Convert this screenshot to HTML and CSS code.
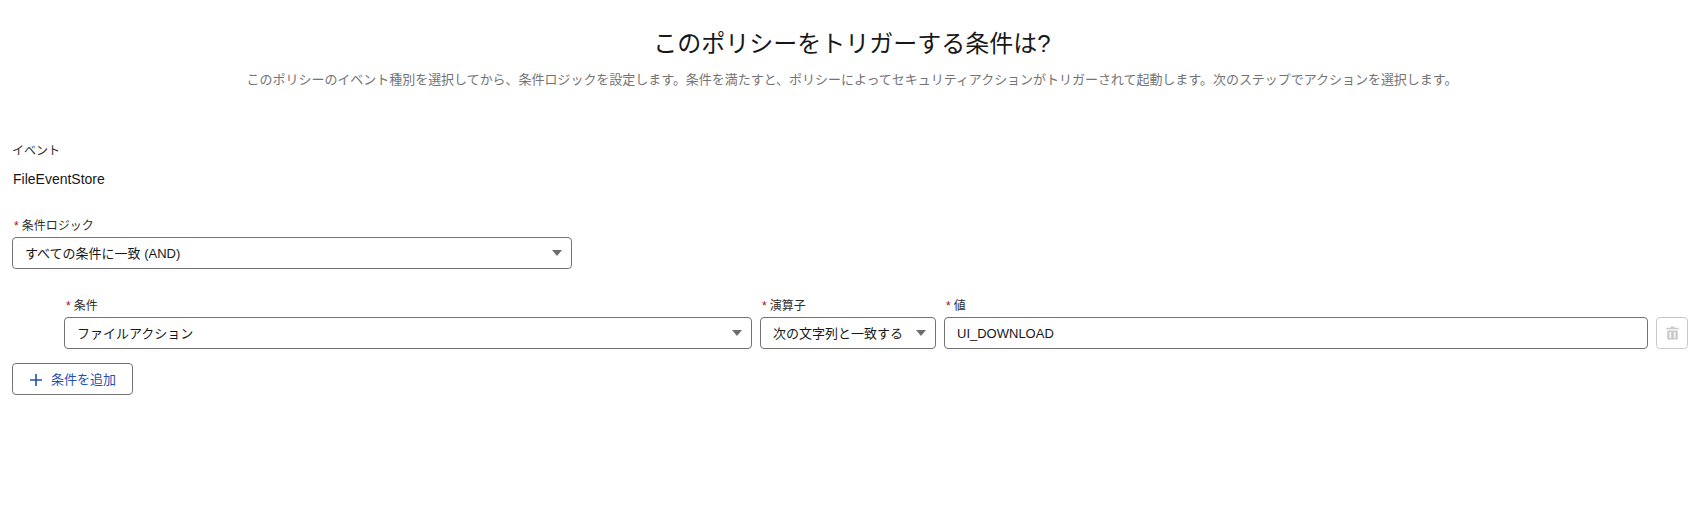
FILE: index.html
```html
<!DOCTYPE html>
<html lang="ja">
<head>
<meta charset="utf-8">
<title>条件</title>
<link rel="stylesheet" href="styles.css">
</head>
<body>
<main class="page">
  <header class="head">
    <h1 class="title">このポリシーをトリガーする条件は?</h1>
    <p class="sub">このポリシーのイベント種別を選択してから、条件ロジックを設定します。条件を満たすと、ポリシーによってセキュリティアクションがトリガーされて起動します。次のステップでアクションを選択します。</p>
  </header>
  <section class="event">
    <div class="label plain">イベント</div>
    <div class="event-value">FileEventStore</div>
  </section>
  <section class="logic">
    <div class="label"><span class="req">*</span>条件ロジック</div>
    <div class="select"><span class="val">すべての条件に一致 (AND)</span><span class="caret"></span></div>
  </section>
  <section class="row">
    <div class="field f-cond">
      <div class="label"><span class="req">*</span>条件</div>
      <div class="select"><span class="val">ファイルアクション</span><span class="caret"></span></div>
    </div>
    <div class="field f-op">
      <div class="label"><span class="req">*</span>演算子</div>
      <div class="select"><span class="val">次の文字列と一致する</span><span class="caret"></span></div>
    </div>
    <div class="field f-val">
      <div class="label"><span class="req">*</span>値</div>
      <div class="select"><span class="val">UI_DOWNLOAD</span></div>
    </div>
    <button class="trash" type="button" aria-label="削除">
      <svg width="13" height="14" viewBox="0 0 13 14"><path d="M4.7 0.5h3.6v1.2h4.4V3.2H0.3V1.7h4.4zM1.3 4.4h10.4V13.5H1.3zM3.6 6v6h1.5V6zm4.3 0v6h1.5V6z" fill="#c9c9c9" fill-rule="evenodd"/></svg>
    </button>
  </section>
  <button class="add" type="button">
    <svg class="add-icon" width="12" height="12" viewBox="0 0 12 12"><path d="M5.2 0h1.6v5.2H12v1.6H6.8V12H5.2V6.8H0V5.2h5.2z" fill="#2450b4"/></svg>
    <span class="add-text">条件を追加</span>
  </button>
</main>
</body>
</html>
```
FILE: styles.css
```css
* { box-sizing: border-box; }
html, body { margin: 0; background: #fff; }
body {
  font-family: "Liberation Sans", "Noto Sans CJK JP", sans-serif;
  color: #181818;
  font-size: 13px;
}
.page { width: 1706px; height: 520px; padding: 0 18px 0 12px; }
.head { text-align: center; padding: 28px 0 0 4px; }
.title { margin: 0; font-size: 24px; font-weight: 400; line-height: 32px; color: #181818; }
.sub { margin: 10px 0 0; font-size: 13px; line-height: 20px; color: #747474; letter-spacing: -0.03px; }
.event { margin-top: 52px; }
.label { font-size: 12px; line-height: 18px; color: #2e2e2e; }
.req { color: #ba0517; margin: 0 3px 0 2px; }
.event-value { margin-top: 9px; padding-left: 1px; line-height: 20px; font-size: 14px; }
.logic { margin-top: 28px; width: 560px; }
.select {
  height: 32px; margin-top: 2px; border: 1px solid #747474; border-radius: 4px;
  background: #fff; padding: 0 12px; display: flex; align-items: center; justify-content: space-between;
  font-size: 13px; line-height: 30px;
}
.val { margin-top: 2px; }
.caret { width: 0; height: 0; border-left: 5px solid transparent; border-right: 5px solid transparent; border-top: 6px solid #706e6b; margin-right: -3px; }
.row { display: flex; align-items: flex-end; gap: 8px; margin: 28px 0 0 52px; }
.field { flex: none; }
.f-cond { width: 688px; }
.f-op { width: 176px; }
.f-val { width: 704px; }
.trash { width: 32px; height: 32px; border: 1px solid #c9c9c9; border-radius: 4px; background: #fff; padding: 0; display: flex; align-items: center; justify-content: center; }
.add {
  display: flex; align-items: center; gap: 9px; width: 121px; height: 32px; margin-top: 14px; padding: 0 0 0 17px;
  border: 1px solid #747474; border-radius: 4px; background: #fff; color: #2450b4; font: inherit; font-size: 13px;
}
.add-icon { margin-top: 2px; }
.add-text { margin-bottom: 1px; }
```
